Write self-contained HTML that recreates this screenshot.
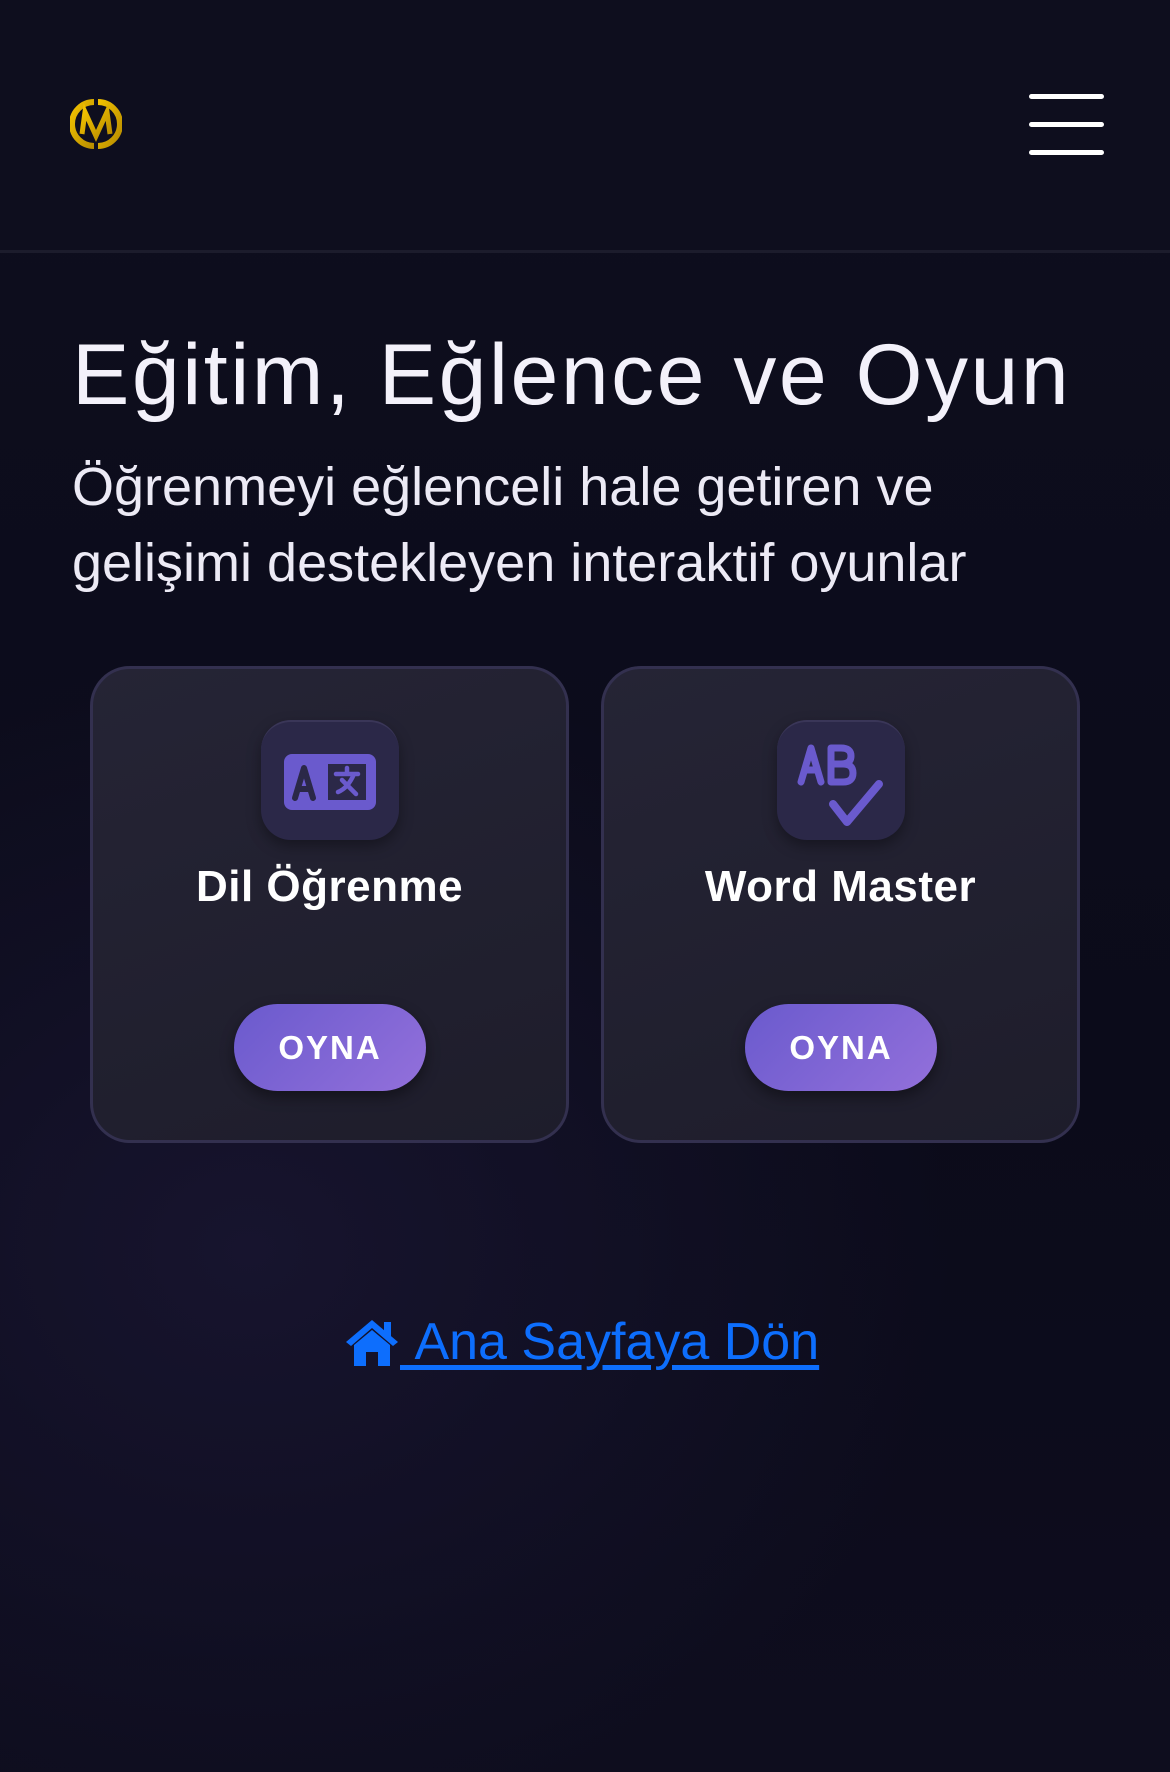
<!DOCTYPE html>
<html><head><meta charset="utf-8">
<style>
*{margin:0;padding:0;box-sizing:border-box}
html,body{width:1170px;height:1772px;overflow:hidden}
body{background:radial-gradient(ellipse 700px 600px at 250px 1250px,#17142e 0%,rgba(14,13,30,0) 100%),linear-gradient(180deg,#0e0e1e 0%,#0b0b1a 60%,#0e0d1e 100%);font-family:"Liberation Sans",sans-serif;color:#f3f1fa;position:relative}
.hdr{position:absolute;left:0;top:0;width:1170px;height:253px;border-bottom:3px solid #1c1c2c;background:#0e0e1e}
.ham{position:absolute;left:1029px;width:75px;height:5px;background:#fff;border-radius:3px}
h1{position:absolute;left:72px;top:326px;font-size:86px;font-weight:500;letter-spacing:2.5px;white-space:nowrap;color:#f3f1fa}
.sub{position:absolute;left:72px;top:449px;font-size:54px;line-height:76px;width:1080px;color:#eceaf5;white-space:nowrap}
.card{position:absolute;top:666px;width:479px;height:477px;border-radius:40px;background:linear-gradient(160deg,#252435,#1e1d2b);border:3px solid #33304f}
.ib{position:absolute;top:51px;width:138px;height:120px;border-radius:30px;background:#2b2848;box-shadow:0 6px 14px rgba(0,0,0,.35);border-top:2px solid #3a3658}
.ct{position:absolute;left:0;right:0;top:193px;text-align:center;font-size:44px;font-weight:bold;color:#fff;letter-spacing:0.5px}
.btn{position:absolute;left:141px;top:335px;width:192px;height:87px;border-radius:44px;background:linear-gradient(135deg,#6a5acd,#9370db);box-shadow:0 6px 14px rgba(0,0,0,.4);color:#fff;font-weight:bold;font-size:33px;letter-spacing:2px;text-align:center;line-height:87px}
.link{position:absolute;top:1312px;color:#0d6efd;font-size:52px;text-decoration:underline;white-space:nowrap;text-underline-offset:6px}
</style></head><body>
<div class="hdr">
<svg style="position:absolute;left:70px;top:98px" width="52" height="52" viewBox="0 0 52 52">
<defs><linearGradient id="g" x1="0" y1="0" x2="1" y2="1"><stop offset="0" stop-color="#f2c200"/><stop offset="1" stop-color="#b88d00"/></linearGradient></defs>
<path d="M24 4 A22 22 0 0 0 24 48" fill="none" stroke="url(#g)" stroke-width="6"/>
<path d="M28 4 A22 22 0 0 1 28 48" fill="none" stroke="url(#g)" stroke-width="6"/>
<path d="M12 36 L15 14 L26 38 L37 14 L40 36" fill="none" stroke="url(#g)" stroke-width="5" stroke-linejoin="miter"/>
</svg>
<div class="ham" style="top:94px"></div>
<div class="ham" style="top:122px"></div>
<div class="ham" style="top:150px"></div>
</div>
<h1>Eğitim, Eğlence ve Oyun</h1>
<div class="sub">Öğrenmeyi eğlenceli hale getiren ve<br>gelişimi destekleyen interaktif oyunlar</div>

<div class="card" style="left:90px">
<div class="ib" style="left:168px">
<svg style="position:absolute;left:23px;top:32px" width="92" height="56" viewBox="0 0 92 56">
<rect x="0" y="0" width="92" height="56" rx="8" fill="#6a5acd"/>
<rect x="44" y="10" width="38" height="36" fill="#2b2848"/>
<path d="M11 44 L20 14 L29 44 M14 35 H26" fill="none" stroke="#2b2848" stroke-width="6" stroke-linecap="round" stroke-linejoin="round"/>
<path d="M52 20 H74 M63 14 V20 M70 20 Q64 34 54 38 M58 26 L72 40" fill="none" stroke="#6a5acd" stroke-width="4.5" stroke-linecap="round"/>
</svg>
</div>
<div class="ct">Dil Öğrenme</div>
<div class="btn">OYNA</div>
</div>

<div class="card" style="left:601px">
<div class="ib" style="left:173px;width:128px">
<svg style="position:absolute;left:20px;top:20px" width="90" height="84" viewBox="0 0 90 84">
<path d="M4 40 L14 6 L24 40 M8 28 H20" fill="none" stroke="#6a5acd" stroke-width="7" stroke-linecap="round" stroke-linejoin="round"/>
<path d="M34 6 H44 Q54 6 54 14 Q54 22 44 22 H34 Z M34 22 H46 Q56 22 56 31 Q56 40 46 40 H34 Z" fill="none" stroke="#6a5acd" stroke-width="7" stroke-linejoin="round"/>
<path d="M36 62 L50 80 L82 42" fill="none" stroke="#6a5acd" stroke-width="8" stroke-linecap="round" stroke-linejoin="round"/>
</svg>
</div>
<div class="ct">Word Master</div>
<div class="btn">OYNA</div>
</div>

<svg style="position:absolute;left:345px;top:1318px" width="54" height="48" viewBox="0 0 54 48">
<path d="M27 2 L1 24 L6 28 L27 10 L48 28 L53 24 Z" fill="#0d6efd"/>
<path d="M9 27 L27 12 L45 27 V48 H33 V34 H21 V48 H9 Z" fill="#0d6efd"/>
<rect x="39" y="4" width="7" height="14" fill="#0d6efd"/>
</svg>
<div class="link" style="left:400px">&nbsp;Ana Sayfaya Dön</div>
</body></html>
